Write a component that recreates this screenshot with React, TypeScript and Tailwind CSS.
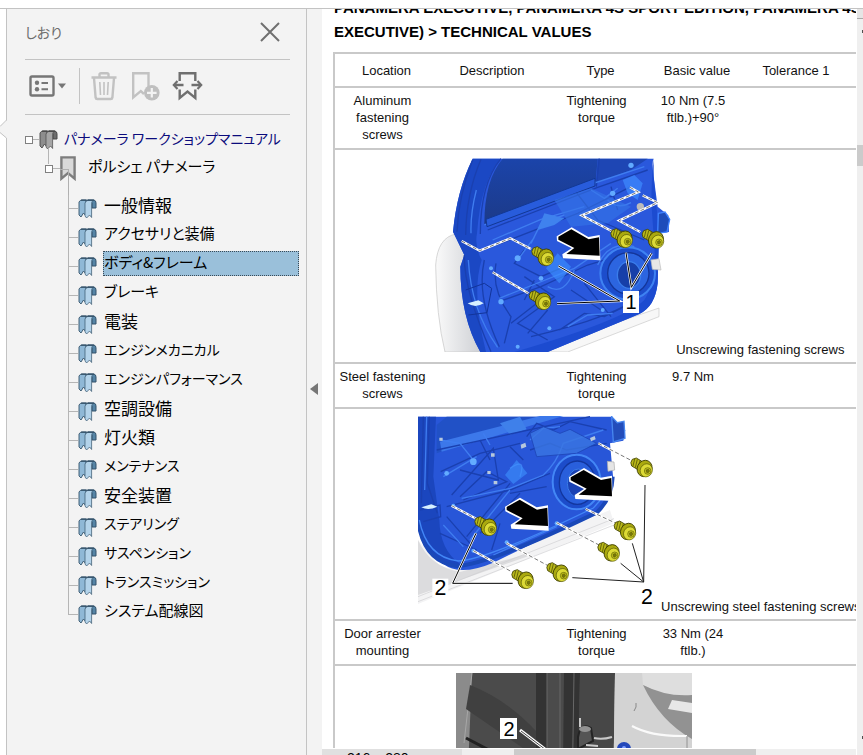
import React from 'react'

const sections = [
  { name: '一般情報', size: 'text-[17px]' },
  { name: 'アクセサリと装備', size: 'text-[15px]' },
  { name: 'ボディ&フレーム', size: 'text-[15px]' },
  { name: 'ブレーキ', size: 'text-[15px]' },
  { name: '電装', size: 'text-[17px]' },
  { name: 'エンジンメカニカル', size: 'text-[14px]' },
  { name: 'エンジンパフォーマンス', size: 'text-[14px]' },
  { name: '空調設備', size: 'text-[17px]' },
  { name: '灯火類', size: 'text-[17px]' },
  { name: 'メンテナンス', size: 'text-[14px]' },
  { name: '安全装置', size: 'text-[17px]' },
  { name: 'ステアリング', size: 'text-[14px]' },
  { name: 'サスペンション', size: 'text-[14px]' },
  { name: 'トランスミッション', size: 'text-[14px]' },
  { name: 'システム配線図', size: 'text-[15px]' },
]

function StackIcon({ gray = false }: { gray?: boolean }) {
  const light = gray ? '#a5a5a5' : '#b3d3ea'
  const mid = gray ? '#8d8d8d' : '#8fb8d6'
  const dark = gray ? '#6c6c6c' : '#5584a5'
  const edge = gray ? '#484848' : '#34536b'
  return (
    <svg className="h-5 w-[19px] shrink-0" viewBox="0 0 19 20" aria-hidden="true">
      <path d="M10 1H16Q18 1.5 18 4V9L14 9V4Z" fill={dark} stroke={edge} strokeWidth="1" />
      <path d="M1 3Q2 1 4 1H8V17L5.5 14L3 18L1 16Z" fill={mid} stroke={edge} strokeWidth=".9" />
      <path d="M7 4Q8 1.4 10 1.4H15Q13.6 2.5 13.6 5V18.5L11.6 16L8.6 19L7 17Z" fill={light} stroke={edge} strokeWidth=".7" />
      <path d="M3 1.2H16" stroke={edge} strokeWidth="1.3" />
    </svg>
  )
}

function Toolbar() {
  return (
    <div className="flex h-[55px] items-center border-b border-[#c3c3c3] pl-1 pb-[3px]">
      <button aria-label="オプション" className="flex items-center gap-[3px]">
        <svg className="h-[22px] w-[26px]" viewBox="0 0 26 22" fill="none" stroke="#767676">
          <rect x="1.5" y="1.5" width="23" height="19" rx="1.5" strokeWidth="2.4" />
          <g fill="#767676" stroke="none">
            <circle cx="8" cy="7.8" r="2.2" />
            <circle cx="8" cy="14.2" r="2.2" />
          </g>
          <path d="M12.5 8H19M12.5 14.2H19" strokeWidth="2" />
        </svg>
        <svg className="h-[6px] w-2" viewBox="0 0 8 6"><path d="M0 .5H8L4 5.5Z" fill="#767676" /></svg>
      </button>
      <span className="ml-[13px] h-9 w-px bg-[#c3c3c3]" />
      <button aria-label="削除" className="ml-[11px]">
        <svg className="h-[30px] w-[26px]" viewBox="0 0 26 30" fill="none" stroke="#c2c2c2" strokeWidth="2.4">
          <path d="M.5 6.5H25.5M8.5 6V3.6Q8.5 2.2 10 2.2H16Q17.5 2.2 17.5 3.6V6M3 7L4.6 26.5Q4.8 28 6.3 28H19.7Q21.2 28 21.4 26.5L23 7" />
          <path d="M8.8 11L9.5 24M13 11V24M17.2 11L16.5 24" strokeWidth="1.6" />
        </svg>
      </button>
      <button aria-label="新規しおり" className="ml-[14px]">
        <svg className="h-[30px] w-[29px]" viewBox="0 0 29 30" fill="none" stroke="#c2c2c2">
          <path d="M17.5 16V2.2H2.2V26.5L9.8 20L13 23" strokeWidth="2.4" />
          <circle cx="20.8" cy="21.8" r="7.8" fill="#bfbfbf" stroke="none" />
          <path d="M20.8 17V26.6M16 21.8H25.6" stroke="#f3f3f3" strokeWidth="2.2" />
        </svg>
      </button>
      <button aria-label="現在のしおりを展開" className="ml-3">
        <svg className="h-[30px] w-[31px]" viewBox="0 0 31 30" fill="none" stroke="#6f6f6f" strokeWidth="2.4">
          <path d="M7.7 10V2.2H23.3V10M7.7 18.5V27L15.5 20.5L23.3 27V18.5" />
          <path d="M2 14H11.5M19.5 14H29" />
          <path d="M5.5 10L1.8 14L5.5 18M25.5 10L29.2 14L25.5 18" strokeWidth="2.2" />
        </svg>
      </button>
    </div>
  )
}

function BookmarkTree() {
  return (
    <ul className="pt-[10px] text-black [font-feature-settings:'palt']">
      <li>
        <div className="flex h-[29px] items-center">
          <button aria-label="折りたたむ" className="size-2 shrink-0 border border-[#808080] bg-white" />
          <span className="h-px w-[6px] shrink-0 bg-[#b5b5b5]" />
          <StackIcon gray />
          <a href="#manual" className="ml-[6px] whitespace-nowrap pb-[3px] text-[14px] text-[#0b0b7c]">パナメーラ ワークショップマニュアル</a>
        </div>
        <ul>
          <li className="relative">
            <div className="flex h-[29px] items-center pl-5">
              <button aria-label="折りたたむ" className="size-2 shrink-0 border border-[#808080] bg-white" />
              <span className="h-px w-[7px] bg-[#b5b5b5]" />
              <svg className="h-[25px] w-4" viewBox="0 0 16 25" aria-hidden="true">
                <path d="M1.4 1.4H14.6V22.6L8 17L1.4 22.6Z" fill="#d9d9d9" stroke="#7d7d7d" strokeWidth="2.4" />
              </svg>
              <a href="#panamera" className="ml-3 whitespace-nowrap pb-[5px] text-[15px]">ポルシェ パナメーラ</a>
            </div>
            <span className="absolute -top-[6px] left-[23px] h-4 w-px bg-[#b5b5b5]" />
            <span className="absolute left-[35px] top-[15px] h-[26px] w-[9px] border-r border-t border-[#b0b0b0]" />
            <ul className="pl-[43px] pt-[11px]">
              {sections.map(({ name, size }, i) => (
                <li key={name} className="flex h-[29px] items-center">
                  <span className="h-full w-[10px] shrink-0">
                    <span className="block h-[15px] border-b border-l border-[#b5b5b5]" />
                    {i < sections.length - 1 && <span className="block h-[14px] border-l border-[#b5b5b5]" />}
                  </span>
                  <StackIcon />
                  <a
                    href={'#section-' + i}
                    className={
                      (i === 2
                        ? 'w-[196px] border-[#3a4a56] border-dotted bg-[#9ac0da] '
                        : 'border-transparent ') +
                      'mb-[6px] ml-[6px] flex h-[25px] shrink-0 items-center whitespace-nowrap border pb-[2px] ' +
                      size
                    }
                  >
                    {name}
                  </a>
                </li>
              ))}
            </ul>
          </li>
        </ul>
      </li>
    </ul>
  )
}

function Screw({ x, y }: { x: number; y: number }) {
  return (
    <g transform={`translate(${x} ${y})`} stroke="#3f4000" strokeWidth="2.5">
      <path d="M-40 -30L-28 -34L-8 -22L-18 4L-42 -10Q-48 -20 -40 -30Z" fill="#b9b81a" />
      <path d="M-33 -31L-38 -10M-25 -30L-31 -5M-17 -26L-23 0" strokeWidth="2" />
      <ellipse cx="-4" cy="-1" rx="22" ry="25" transform="rotate(25)" fill="#aaa90f" />
      <ellipse cx="3" cy="2" rx="18" ry="20" transform="rotate(25)" fill="#dcda35" strokeWidth="1.5" />
      <circle cx="6" cy="5" r="10" fill="#c5c41c" strokeWidth="1.5" />
      <path d="M1 2L8 -1L12 5L7 11L2 9Z" fill="#77770a" strokeWidth="1" />
    </g>
  )
}

function Arrow({ x, y }: { x: number; y: number }) {
  return (
    <g transform={`translate(${x} ${y})`}>
      <path d="M-3 22L42 -5L92 24L126 18L128 94L16 88L14 76L42 58L-2 36Z" fill="white" />
      <path d="M2 23L41 1L93 31L124 25L126 80L26 75L50 57L2 32Z" fill="black" />
    </g>
  )
}

function Drill({ d }: { d: string }) {
  return (
    <g fill="none">
      <path d={d} stroke="white" strokeWidth="7" />
      <path d={d} stroke="#333" strokeWidth="2" strokeDasharray="12 7" />
    </g>
  )
}

function Leader({ d }: { d: string }) {
  return (
    <g fill="none">
      <path d={d} stroke="white" strokeWidth="7" />
      <path d={d} stroke="black" strokeWidth="3" />
    </g>
  )
}

function DoorFront() {
  return (
    <svg className="inline h-[197px] w-[238px] align-baseline" viewBox="12 21 714 591" role="img" aria-label="Door panel, screws 1">
      <defs>
        <linearGradient id="glass" x1="0" y1="0" x2="0" y2="1">
          <stop offset="0" stopColor="#1b44aa" />
          <stop offset="1" stopColor="#1c3a88" />
        </linearGradient>
        <linearGradient id="skin" x1="0" y1="0" x2="1" y2="0">
          <stop offset="0" stopColor="#fafafa" />
          <stop offset="1" stopColor="#c9cbd0" />
        </linearGradient>
        <clipPath id="frontClip"><path d="M12 24H726V606H12Z" /></clipPath>
      </defs>
      <g clipPath="url(#frontClip)">
        <path d="M75 252Q20 262 14 345Q16 500 42 606H165L110 300Z" fill="url(#skin)" stroke="#c4c4c4" strokeWidth="2" />
        <path d="M300 606L684 474V500L410 606Z" fill="#f7f7f7" stroke="#c8c8c8" strokeWidth="2" />
        <path d="M125 26H668Q662 34 668 80L680 170L712 196L714 246L684 250L680 400Q672 470 625 492L350 606H148Q88 500 88 350L100 315L66 245Q78 120 125 26Z" fill="#2a58dc" />
        <path d="M125 26H210Q150 90 138 250Q130 290 152 330Q120 430 165 606H148Q88 500 88 350L100 315L66 245Q78 120 125 26Z" fill="#1b48c4" />
        <path d="M668 26Q656 120 666 230Q684 380 640 450Q580 510 250 606H350L625 492Q672 470 680 400L684 250L668 80Z" fill="#1c4bd0" />
        <path d="M215 26H500L494 92L160 222Q160 90 215 26Z" fill="url(#glass)" />
        <path d="M500 26H650L600 60L495 100Z" fill="#1e46b4" />
        <g fill="none" stroke="#1a40b0" strokeWidth="4">
          <path d="M125 30Q82 140 78 245M150 28Q106 130 104 255M210 26Q148 100 148 252" />
          <path d="M505 26L496 110M100 315Q98 420 180 605M160 330Q135 440 205 590M195 340Q180 420 240 500L220 580" />
          <path d="M170 240L500 112L650 60M196 285L440 190L600 110" />
          <path d="M204 455L330 410L470 345L620 300M280 380L370 440L260 520L350 570M290 550L350 480M240 520L330 450M460 400L540 500M420 420L510 480" />
          <path d="M280 300L250 340L330 380L400 350M310 390L280 450M430 120L500 210L640 270M540 110L560 180" />
          <path d="M385 540L460 490L520 500L580 470M300 560Q560 500 640 430" />
        </g>
        <g fill="none" stroke="#3f7df0" strokeWidth="4">
          <path d="M160 225L500 96L640 50M185 270L330 208L460 170M205 445L430 355L540 280" />
          <path d="M112 330Q120 480 200 592M136 120Q118 190 120 250M410 530L470 495L545 490M500 345Q535 270 610 290" />
          <path d="M350 410Q400 440 430 360M300 280L330 220L400 195M260 330L310 262M530 150Q560 180 600 158M480 120L520 145L560 115" />
        </g>
        <path d="M165 208L492 85V108L168 230Z" fill="#285cdc" stroke="#123894" strokeWidth="3" />
        <path d="M340 190L400 205L370 225L320 240Z" fill="#3f82ee" />
        <path d="M345 355L380 310L420 350L385 400Z" fill="#3c91ff" opacity=".65" />
        <path d="M370 150L480 115L600 170L530 220L420 230Z" fill="#3574e8" opacity=".6" />
        <ellipse cx="590" cy="370" rx="82" ry="78" fill="#1c4dcc" stroke="#3e82f2" strokeWidth="6" />
        <ellipse cx="592" cy="370" rx="62" ry="62" fill="#2c65e0" stroke="#14369a" strokeWidth="4" />
        <ellipse cx="594" cy="375" rx="35" ry="40" fill="#173fa9" stroke="#3a7cea" strokeWidth="4" />
        <path d="M575 90L610 75L635 100L620 150L590 130Z" fill="#3f8bff" opacity=".7" />
        <path d="M682 190L702 186L716 208L708 246L680 250Z" fill="#1e4cba" stroke="#4083ff" strokeWidth="4" />
        <path d="M660 330L684 326L690 360L664 358Z" fill="#e7e7e7" stroke="#bbb" strokeWidth="2" />
        <circle cx="628" cy="170" r="11" fill="#bbb" />
        <path d="M110 460Q132 476 158 460L142 451Z" fill="#d7f0ff" />
        <path d="M104 420L160 400L182 415L168 488L112 495" fill="none" stroke="#12349a" strokeWidth="3" />
        <g fill="#61aaff">
          <circle cx="210" cy="455" r="8" /><circle cx="260" cy="325" r="9" /><circle cx="330" cy="385" r="7" />
          <circle cx="600" cy="46" r="8" /><circle cx="180" cy="355" r="6" /><circle cx="545" cy="130" r="8" />
          <circle cx="355" cy="535" r="6" /><circle cx="260" cy="590" r="6" /><circle cx="515" cy="480" r="6" />
        </g>
      </g>
      <Drill d="M92 273L146 302L238 265L300 297" />
      <Drill d="M185 367L292 430" />
      <Drill d="M597 112L622 126L452 196L543 244" />
      <Drill d="M635 136L680 158L564 212L628 246" />
      <Leader d="M382 348L566 453L378 461" />
      <Leader d="M585 308L601 412L662 310" />
      <Arrow x={380} y={237} />
      <Screw x={347} y={324} />
      <Screw x={339} y={456} />
      <Screw x={584} y={270} />
      <Screw x={678} y={272} />
      <rect x="576" y="423" width="48" height="66" fill="white" />
      <text x="600" y="477" textAnchor="middle" fontSize="60" fontFamily="Liberation Sans, Arial, sans-serif">1</text>
    </svg>
  )
}

function DoorLower() {
  return (
    <svg className="inline h-[195px] w-[239px] align-baseline" viewBox="24 18 717 585" role="img" aria-label="Door panel, screws 2">
      <path d="M24 390L90 470L180 480L600 300L612 340L24 582Z" fill="#f3f3f4" />
      <path d="M24 390Q60 470 150 486L360 430L350 440L24 555Z" fill="#dcdcde" />
      <path d="M24 560L612 326M24 575L612 345" stroke="#cfcfd2" strokeWidth="2" />
      <path d="M24 20H608V48L646 60L640 92L600 100L610 210Q608 270 560 308L250 458Q150 500 100 462Q35 410 24 340Z" fill="#2856d8" />
      <path d="M24 20H78L70 200L88 330Q90 420 150 462L100 462Q35 410 24 340Z" fill="#1b46be" />
      <path d="M24 330Q40 455 140 468Q240 462 560 308Q606 265 608 200" fill="none" stroke="#1a48b8" strokeWidth="12" />
      <path d="M28 330Q50 442 145 453Q235 448 550 294Q588 260 594 200" fill="none" stroke="#4286f6" strokeWidth="4" />
      <path d="M80 45L110 20H400L80 130Z" fill="#2151c6" />
      <path d="M90 95L390 18H460L95 125Z" fill="#3c78ea" />
      <path d="M270 40L330 20L350 58L300 74Z" fill="#3f80ea" />
      <g fill="none" stroke="#1a40b0" strokeWidth="4">
        <path d="M40 20L34 280M58 20L52 220L82 310M80 120L540 20M92 185L210 130L330 100" />
        <path d="M125 255L250 115L265 210L150 180M150 260L230 185L290 215L160 270M210 90L240 150M110 290L300 240L420 190" />
        <path d="M170 380L300 220M210 370L330 250M245 420L270 340M300 250L410 230M110 320L180 400M90 370L200 420" />
        <path d="M350 80L380 40L430 60L480 35L590 60M360 120L420 100L470 120L590 100M340 150L300 110M30 300L90 285L92 320L40 335" />
      </g>
      <g fill="none" stroke="#3f7df0" strokeWidth="4">
        <path d="M50 20L44 240M100 200L200 140M155 265L300 235L400 195Q440 160 460 100L580 60" />
        <path d="M300 175Q350 140 330 200M180 390L300 240M100 345L160 410M360 90L400 55L450 50M250 435L440 350" />
        <path d="M90 90L150 100L190 150M220 70L240 105" />
      </g>
      <path d="M285 195L320 150L352 190L310 222Z" fill="#3d92ff" opacity=".6" />
      <path d="M360 70L400 50L450 70L480 58L560 100L500 130L380 140Z" fill="#3a76e2" stroke="#1f48b8" strokeWidth="3" opacity=".8" />
      <ellipse cx="500" cy="216" rx="72" ry="82" fill="#1c4cca" stroke="#4387f6" strokeWidth="6" />
      <ellipse cx="502" cy="218" rx="54" ry="65" fill="#295fdc" stroke="#12369e" strokeWidth="4" />
      <ellipse cx="505" cy="220" rx="33" ry="43" fill="#1a42b4" stroke="#397ae8" strokeWidth="3" />
      <path d="M605 20L622 38L642 34L645 85L610 96Z" fill="#234dbb" stroke="#4786ef" strokeWidth="4" />
      <path d="M592 154L612 156L614 180L594 184Z" fill="#e5e5e5" stroke="#aaa" strokeWidth="2" />
      <path d="M34 292Q55 303 82 290L64 283Z" fill="#d7f0ff" />
      <path d="M88 83h10v9h-10zM243 130h11v10h-11zM232 183h10v9h-10zM251 213h11v10h-11zM332 104l14-6 3 12-15 6zM540 84l14-6 3 10-14 6z" fill="#b7c8dc" />
      <g fill="#63acff">
        <circle cx="190" cy="155" r="10" /><circle cx="110" cy="190" r="7" /><circle cx="130" cy="287" r="6" />
        <circle cx="190" cy="422" r="6" /><circle cx="290" cy="397" r="6" /><circle cx="440" cy="340" r="6" />
      </g>
      <Drill d="M125 287L200 327" />
      <Drill d="M190 422L310 488" />
      <Drill d="M290 400L412 466" />
      <Drill d="M440 338L567 405" />
      <Drill d="M527 297L618 340" />
      <Drill d="M565 100L665 152" />
      <path d="M705 225L701 516L487 503M701 516L632 460M701 516L667 400" fill="none" stroke="#222" strokeWidth="3" />
      <Leader d="M198 370L128 520H308" />
      <Arrow x={288} y={268} />
      <Arrow x={480} y={179} />
      <Screw x={239} y={354} />
      <Screw x={350} y={513} />
      <Screw x={455} y={492} />
      <Screw x={608} y={431} />
      <Screw x={657} y={367} />
      <Screw x={707} y={178} />
      <g fontSize="64" fontFamily="Liberation Sans, Arial, sans-serif" textAnchor="middle">
        <rect x="67" y="506" width="48" height="56" fill="white" />
        <text x="91" y="556">2</text>
        <text x="711" y="581">2</text>
      </g>
    </svg>
  )
}

function DoorArrester() {
  return (
    <svg className="inline h-[195px] w-[236px] align-baseline" viewBox="0 0 236 195" role="img" aria-label="Door arrester">
      <rect width="236" height="195" fill="#4b4b4b" />
      <path d="M0 0H16L8 195H0Z" fill="#8b8b8b" />
      <path d="M16 0L8 70" stroke="#a7a7a7" strokeWidth="1" />
      <path d="M14 12Q50 26 80 58V84L10 36Z" fill="#404040" />
      <path d="M10 65L50 86" stroke="#222" strokeWidth="3" />
      <path d="M80 0H91V195H80ZM108 0H124L120 195H106Z" fill="#333" />
      <path d="M91 0V195M104 0V195M118 0L115 195" stroke="#686868" strokeWidth="1" />
      <path d="M124 0H159L156 195H120Z" fill="#474747" />
      <path d="M159 0H236V195H156Z" fill="#cbcbcb" />
      <path d="M159 0H186Q188 25 236 66V195H156Z" fill="#d3d3d3" />
      <path d="M186 0H236V26Q208 24 187 12Z" fill="#dedede" />
      <path d="M187 12Q210 24 236 22V66Q204 48 187 12Z" fill="#929292" />
      <path d="M216 27L236 30V40L212 36Z" fill="#e7e7e7" />
      <path d="M176 53Q196 64 231 63" fill="none" stroke="#fafafa" strokeWidth="2" />
      <path d="M231 63V90" stroke="#929292" />
      <path d="M178 38Q181 34 180 30" fill="none" stroke="#888" />
      <path d="M122 64L124 56Q129 51 135 55L137 68L122 76Z" fill="#555" stroke="#242424" strokeWidth="2" />
      <ellipse cx="129" cy="56" rx="6" ry="3" fill="#929292" />
      <path d="M124 45V54M138 65Q146 67 156 64M130 72L142 73" stroke="#c9c9c9" strokeWidth="2" fill="none" />
      <circle cx="168" cy="76" r="7" fill="#2448ba" /><circle cx="168" cy="75" r="2" fill="#7d9dff" />
      <path d="M64 57L94 80" stroke="white" strokeWidth="3" />
      <path d="M65 58L94 80" stroke="#444" strokeWidth="1" />
      <rect x="44" y="45" width="17" height="21" fill="white" />
      <text x="53" y="63" textAnchor="middle" fontSize="20" fontFamily="Liberation Sans, Arial, sans-serif">2</text>
    </svg>
  )
}

const headers = ['Location', 'Description', 'Type', 'Basic value', 'Tolerance 1', '']

function ValueRow({ location, value }: { location: string; value: string }) {
  return (
    <tr className="border-t-2 border-[#c9c9c9]">
      <td className="px-[3px] pb-[5px] pt-1 align-top">{location}</td>
      <td />
      <td className="px-[3px] pb-[5px] pt-1 align-top">Tightening torque</td>
      <td className="px-[3px] pb-[5px] pt-1 align-top">{value}</td>
      <td />
      <td />
    </tr>
  )
}

function FigureRow({ children, caption }: { children: React.ReactNode; caption: string }) {
  return (
    <tr className="border-t-2 border-[#c9c9c9]">
      <td colSpan={6} className="whitespace-nowrap pb-1 pt-[7px]">
        {children} {caption}
      </td>
    </tr>
  )
}

function Document() {
  return (
    <main className="min-h-0 flex-1 overflow-hidden bg-white pl-[11px]">
      <h1 className="flex h-[43px] items-end overflow-hidden whitespace-nowrap pb-2 pl-px text-[15px] font-bold leading-6">
        <span>
          PANAMERA EXECUTIVE, PANAMERA 4S SPORT EDITION, PANAMERA 4S
          <br />
          EXECUTIVE) &gt; TECHNICAL VALUES
        </span>
      </h1>
      <table className="w-[611px] table-fixed border-collapse border-2 border-[#c9c9c9] text-center text-[13px] leading-[17px] text-[#111]">
        <colgroup>
          <col className="w-[96px]" />
          <col className="w-[116px]" />
          <col className="w-[101px]" />
          <col className="w-[92px]" />
          <col className="w-[106px]" />
          <col className="w-[100px]" />
        </colgroup>
        <thead>
          <tr>
            {headers.map((h) => (
              <th key={h} className="pb-[7px] pl-2 pt-2 font-normal">{h}</th>
            ))}
          </tr>
        </thead>
        <tbody>
          <ValueRow location="Aluminum fastening screws" value="10 Nm (7.5 ftlb.)+90°" />
          <FigureRow caption="Unscrewing fastening screws"><DoorFront /></FigureRow>
          <ValueRow location="Steel fastening screws" value="9.7 Nm" />
          <FigureRow caption="Unscrewing steel fastening screws"><DoorLower /></FigureRow>
          <ValueRow location="Door arrester mounting" value="33 Nm (24 ftlb.)" />
          <tr className="border-t-2 border-[#c9c9c9]">
            <td colSpan={6} className="pb-1 pr-[132px] pt-[7px]"><DoorArrester /></td>
          </tr>
        </tbody>
      </table>
    </main>
  )
}

export default function App() {
  return (
    <div className="flex h-screen flex-col overflow-hidden bg-white pt-2 font-['Liberation_Sans',Arial,'Noto_Sans_CJK_JP',sans-serif]">
      <div className="flex min-h-0 flex-1 border-t border-[#c3c3c3]">
        <div className="relative w-[6px] shrink-0">
          <svg className="absolute left-0 top-[110px] z-10 h-5 w-[7px]" viewBox="0 0 7 20" aria-hidden="true">
            <path d="M7 1L0 7V14L7 20Z" fill="#f3f3f3" />
            <path d="M6.5 0V1L0 7.5M0 13.5L6.5 19V20" fill="none" stroke="#c3c3c3" />
          </svg>
        </div>
        <aside className="w-[301px] shrink-0 border-x border-[#c3c3c3] bg-[#f3f3f3] pl-[18px] pr-4 font-['Noto_Sans_CJK_JP',sans-serif]">
          <header className="flex h-[51px] items-center justify-between border-b border-[#c3c3c3] pb-1 pr-[10px]">
            <h2 className="text-[14px] text-[#6e6e6e] [font-feature-settings:'palt']">しおり</h2>
            <button aria-label="閉じる">
              <svg className="size-5" viewBox="0 0 20 20" stroke="#6f6f6f" strokeWidth="2"><path d="M1 1L19 19M19 1L1 19" /></svg>
            </button>
          </header>
          <Toolbar />
          <BookmarkTree />
        </aside>
        <button aria-label="パネルを隠す" className="flex w-[15px] shrink-0 items-center bg-[#f3f3f3] pl-[3px] pt-[14px]">
          <svg className="h-3 w-2" viewBox="0 0 8 12"><path d="M8 0V12L0 6Z" fill="#767676" /></svg>
        </button>
        <div className="flex min-w-0 flex-1 flex-col">
          <Document />
          <footer className="flex h-[7px] shrink-0 overflow-hidden border-t border-white bg-[#efefef]">
            <div className="w-[140px] bg-[#e0e0e0] pl-[25px] pt-[2px] text-[14px] leading-[14px]">216 x 280 mm</div>
            <div className="w-[52px]" />
            <div className="w-[242px] bg-[#cbcbcb]" />
          </footer>
        </div>
        <div className="ml-px flex w-[6px] shrink-0 flex-col bg-[#efefef]">
          <div className="h-[10px] border-b border-[#a8a8a8] bg-[#e5e5e5]" />
          <div className="mt-[11px] h-[3px] w-px self-end bg-[#505050]" />
          <div className="mt-[112px] h-[21px] bg-[#cbcbcb]" />
          <div className="mb-[16px] mt-auto h-[3px] w-px self-end bg-[#505050]" />
        </div>
      </div>
    </div>
  )
}
